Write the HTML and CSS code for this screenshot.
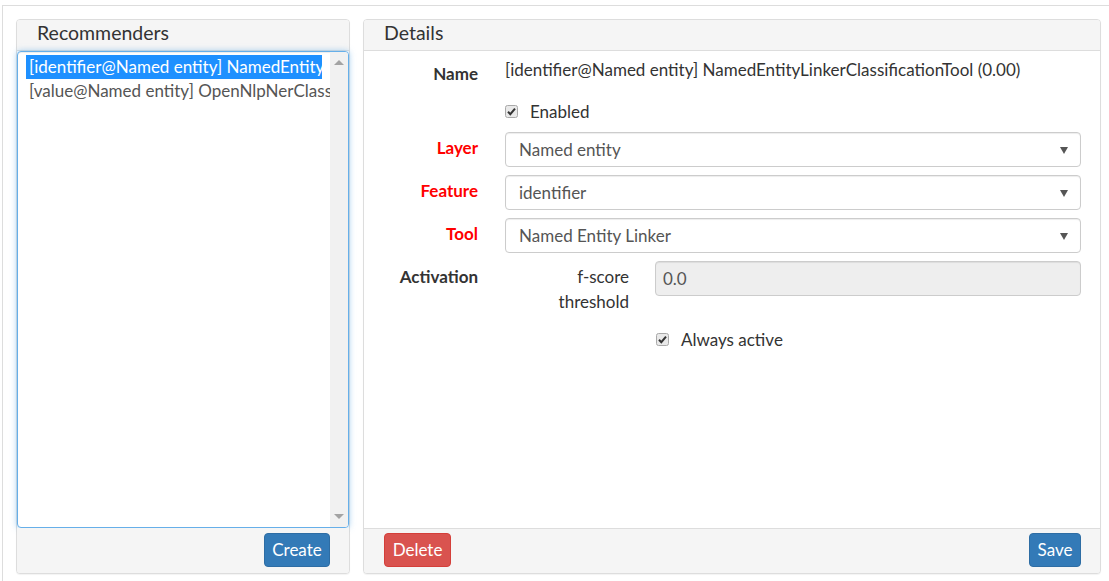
FILE: index.html
```html
<!DOCTYPE html>
<html>
<head>
<meta charset="utf-8">
<link rel="stylesheet" href="styles.css">
</head>
<body>
<div class="page">
  <div class="panel panel-left">
    <div class="panel-heading">Recommenders</div>
    <div class="listbox">
      <div class="list-items">
        <div class="list-item selected">[identifier@Named entity] NamedEntityLinkerClassificationTool (0.00)</div>
        <div class="list-item">[value@Named entity] OpenNlpNerClassificationTool (0.00)</div>
      </div>
      <div class="scrollbar">
        <span class="arrow-up"></span>
        <span class="arrow-down"></span>
      </div>
    </div>
    <div class="panel-footer footer-right">
      <button class="btn btn-primary">Create</button>
    </div>
  </div>
  <div class="panel panel-right">
    <div class="panel-heading">Details</div>
    <div class="panel-body">
      <div class="row row-name">
        <div class="label label-name">Name</div>
        <div class="value">[identifier@Named entity] NamedEntityLinkerClassificationTool (0.00)</div>
      </div>
      <div class="row row-enabled">
        <div class="label"></div>
        <div class="check">
          <svg class="cb" width="13" height="13" viewBox="0 0 13 13"><rect x="0.5" y="0.5" width="12" height="12" rx="2" fill="#e9e9e9" stroke="#a9a9a9"/><path d="M3 6.8 L5.3 9.2 L10 3.6" fill="none" stroke="#333" stroke-width="2"/></svg>
          <span>Enabled</span>
        </div>
      </div>
      <div class="row row-select">
        <div class="label required">Layer</div>
        <div class="select">Named entity<span class="caret"></span></div>
      </div>
      <div class="row row-select">
        <div class="label required">Feature</div>
        <div class="select">identifier<span class="caret"></span></div>
      </div>
      <div class="row row-select">
        <div class="label required">Tool</div>
        <div class="select">Named Entity Linker<span class="caret"></span></div>
      </div>
      <div class="row row-select">
        <div class="label">Activation</div>
        <div class="sub-grid">
          <div class="sub-label">f-score<br>threshold</div>
          <div class="input-disabled">0.0</div>
        </div>
      </div>
      <div class="row row-always">
        <div class="label"></div>
        <div class="sub-grid">
          <div></div>
          <div class="check">
            <svg class="cb" width="13" height="13" viewBox="0 0 13 13"><rect x="0.5" y="0.5" width="12" height="12" rx="2" fill="#e9e9e9" stroke="#a9a9a9"/><path d="M3 6.8 L5.3 9.2 L10 3.6" fill="none" stroke="#333" stroke-width="2"/></svg>
            <span>Always active</span>
          </div>
        </div>
      </div>
    </div>
    <div class="panel-footer footer-split">
      <button class="btn btn-danger">Delete</button>
      <button class="btn btn-primary">Save</button>
    </div>
  </div>
</div>
</body>
</html>
```

FILE: styles.css
```css
* { box-sizing: border-box; }
html, body { margin: 0; padding: 0; background: #fff; }
body {
  font-family: Lato, "Open Sans", "Liberation Sans", sans-serif;
  font-size: 17px;
  color: #333;
  width: 1109px;
  height: 581px;
  overflow: hidden;
}
.page {
  margin: 5px 0 0 2px;
  border-top: 1px solid #ddd;
  border-left: 1px solid #ddd;
  padding: 13px 8px 0 13px;
  display: flex;
  gap: 13px;
  height: 576px;
}
.panel {
  border: 1px solid #ddd;
  border-radius: 4px;
  height: 555px;
  display: flex;
  flex-direction: column;
  background: #fff;
  box-shadow: 0 1px 1px rgba(0,0,0,0.05);
}
.panel-left { width: 334px; flex: none; }
.panel-right { flex: 1; }
.panel-heading {
  height: 31px;
  flex: none;
  background: #f5f5f5;
  border-bottom: 1px solid #ddd;
  border-radius: 3px 3px 0 0;
  padding: 0 0 0 20px;
  font-size: 19.5px;
  line-height: 26px;
  color: #333;
}
.listbox {
  flex: 1;
  display: flex;
  border: 1px solid #66afe9;
  border-radius: 4px;
  box-shadow: inset 0 1px 1px rgba(0,0,0,0.075), 0 0 6px rgba(102,175,233,0.6);
  overflow: hidden;
  background: #fff;
}
.list-items {
  flex: 1;
  overflow: hidden;
  padding: 3px 0 0 8px;
  color: #555;
}
.list-item {
  height: 24px;
  line-height: 24px;
  padding-left: 3px;
  white-space: nowrap;
}
.list-item.selected {
  width: 296px;
  overflow: hidden;
  background: #1e90ff;
  color: #fff;
}
.scrollbar {
  width: 18px;
  flex: none;
  background: #f1f1f1;
  display: flex;
  flex-direction: column;
  justify-content: space-between;
  align-items: center;
  padding: 8px 0 8px;
}
.arrow-up {
  width: 0; height: 0;
  border-left: 5px solid transparent;
  border-right: 5px solid transparent;
  border-bottom: 5px solid #a3a3a3;
}
.arrow-down {
  width: 0; height: 0;
  border-left: 5px solid transparent;
  border-right: 5px solid transparent;
  border-top: 5px solid #a3a3a3;
}
.panel-footer {
  height: 45px;
  flex: none;
  background: #f5f5f5;
  border-top: 1px solid #ddd;
  border-radius: 0 0 3px 3px;
  display: flex;
  align-items: flex-start;
  padding: 4px 19px 0 20px;
}
.panel-left .panel-footer { border-top: none; padding-top: 5px; }
.footer-right { justify-content: flex-end; }
.footer-split { justify-content: space-between; }
.btn {
  font-family: Lato, "Open Sans", "Liberation Sans", sans-serif;
  font-size: 17px;
  height: 34px;
  line-height: 20px;
  padding: 6px 0;
  border-radius: 4px;
  border: 1px solid transparent;
  color: #fff;
}
.btn-primary { background: #337ab7; border-color: #2e6da4; }
.btn-danger { background: #d9534f; border-color: #d43f3a; }
.panel-left .btn { width: 66px; }
.btn-danger { width: 67px; }
.footer-split .btn-primary { width: 52px; }

.panel-body {
  flex: 1;
  padding: 8px 19px 0 0;
}
.row {
  display: grid;
  grid-template-columns: 114px 1fr;
  column-gap: 27px;
}
.label {
  text-align: right;
  font-weight: bold;
  color: #333;
  line-height: 22px;
  padding-top: 5px;
}
.label.required { color: #ff0000; }
.row-name { height: 22px; }
.row-name .label { padding-top: 4px; }
.value { line-height: 22px; color: #333; }
.row-enabled { margin-top: 19px; }
.check {
  display: flex;
  align-items: center;
  gap: 12px;
  height: 22px;
  color: #333;
}
.cb { flex: none; }
.row-select { margin-top: 8px; }
.row-enabled + .row-select { margin-top: 10px; }
.select {
  height: 35px;
  border: 1px solid #ccc;
  border-radius: 4px;
  padding: 0 12px 0 13px;
  line-height: 33px;
  color: #555;
  display: flex;
  justify-content: space-between;
  align-items: center;
  box-shadow: inset 0 1px 1px rgba(0,0,0,0.075);
}
.caret {
  width: 0; height: 0;
  border-left: 4px solid transparent;
  border-right: 4px solid transparent;
  border-top: 7px solid #555;
  margin-top: 2px;
}
.sub-grid {
  display: grid;
  grid-template-columns: 124px 1fr;
  column-gap: 26px;
}
.sub-label {
  text-align: right;
  line-height: 25px;
  padding-top: 3px;
  color: #333;
}
.input-disabled {
  height: 35px;
  border: 1px solid #ccc;
  border-radius: 4px;
  background: #eee;
  padding: 0 12px 0 7px;
  line-height: 33px;
  color: #555;
  box-shadow: inset 0 1px 1px rgba(0,0,0,0.075);
}
.row-always .check { margin-top: 14px; padding-left: 1px; }
```
